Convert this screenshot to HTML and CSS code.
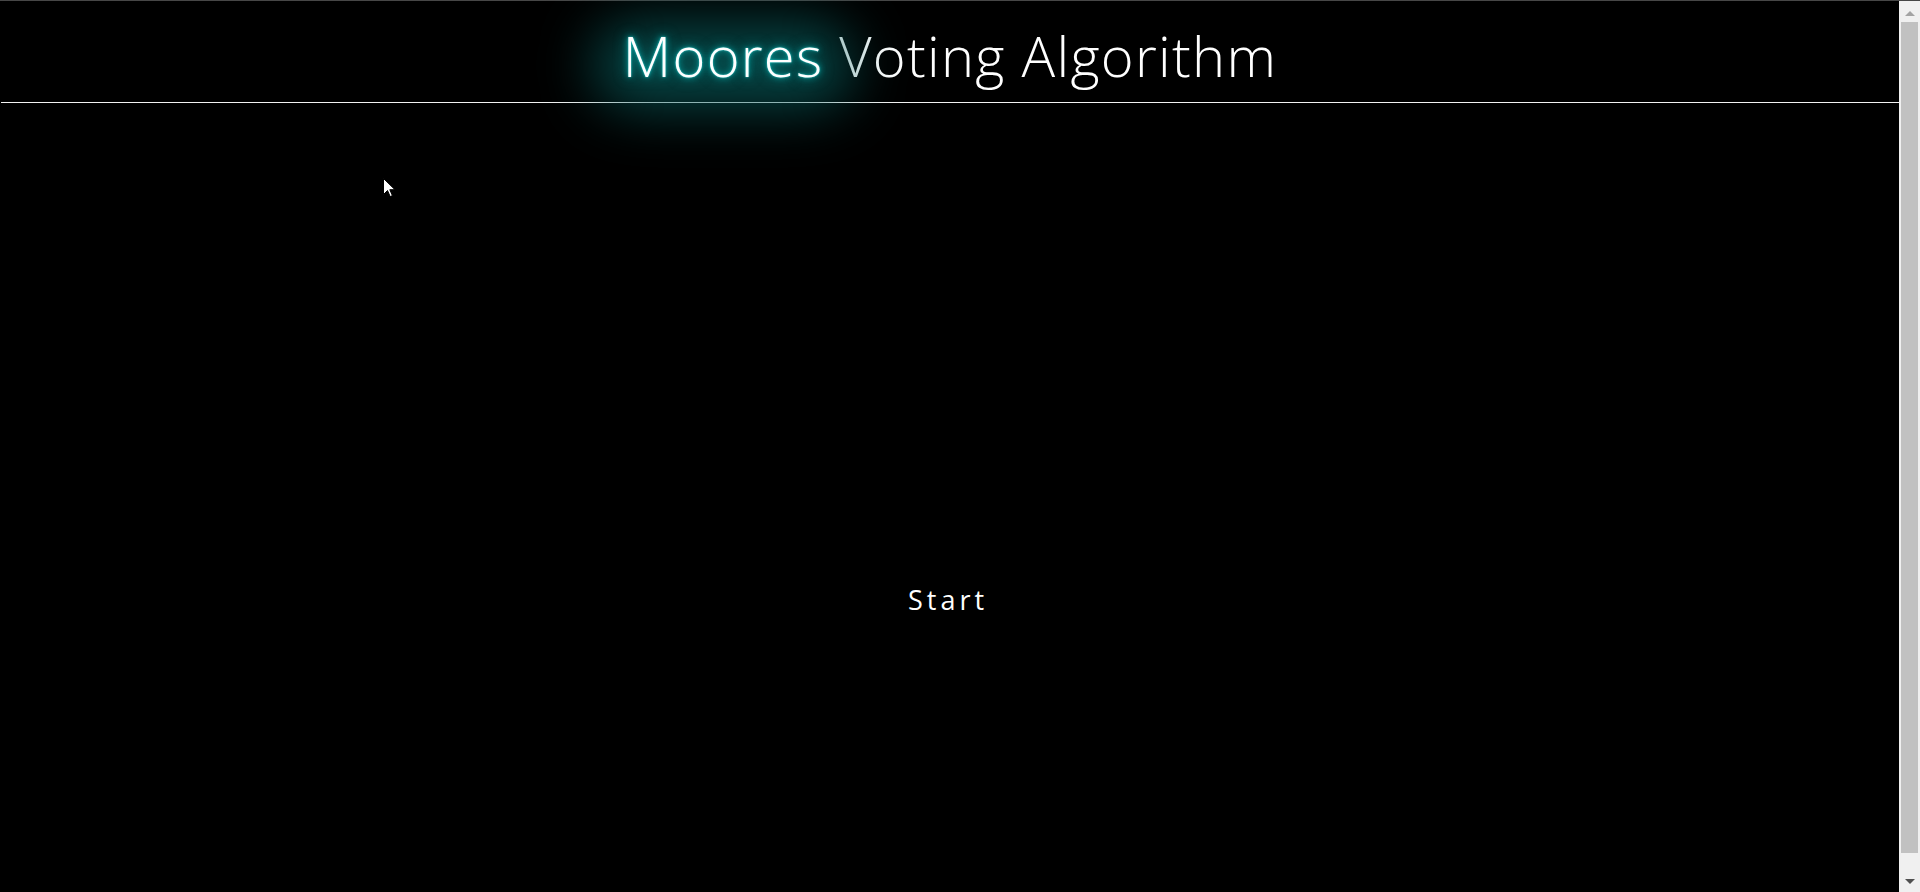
FILE: index.html
```html
<!DOCTYPE html>
<html lang="en">
<head>
<meta charset="utf-8">
<title>Moores Voting Algorithm</title>
<link rel="stylesheet" href="styles.css">
</head>
<body>
<div class="window">
  <main class="page">
    <header class="header">
      <h1 class="title"><span class="glow">Moores</span> Voting Algorithm</h1>
    </header>
    <section class="stage">
      <button class="start-btn" type="button">Start</button>
    </section>
    <svg class="cursor" width="13" height="20" viewBox="0 0 13 20">
      <path d="M0.5 0.5 L0.5 16.5 L4.5 12.5 L7.2 18.6 L9.4 17.6 L6.8 11.7 L12 11.7 Z" fill="#fff" stroke="#000" stroke-width="1"/>
    </svg>
  </main>
  <div class="scrollbar">
    <div class="arrow arrow-up"></div>
    <div class="thumb"></div>
    <div class="arrow arrow-down"></div>
  </div>
</div>
</body>
</html>
```

FILE: styles.css
```css
html, body {
  margin: 0;
  padding: 0;
  height: 100%;
  background: #000;
  overflow: hidden;
}

.window {
  display: flex;
  height: 892px;
  box-sizing: border-box;
  border-top: 1px solid #474747;
}

.page {
  position: relative;
  flex: 1;
  display: flex;
  flex-direction: column;
  padding-left: 1px;
  font-family: "Open Sans", "DejaVu Sans", sans-serif;
  color: #fff;
}

.header {
  border-bottom: 1px solid #f2f2f2;
  padding: 16px 0 9px;
  text-align: center;
}

.title {
  margin: 0;
  font-weight: 300;
  font-size: 56px;
  line-height: 76px;
  letter-spacing: 1.3px;
  color: #fff;
}

.glow {
  position: relative;
  isolation: isolate;
  color: #fff;
  text-shadow:
    0 0 2px rgba(80, 255, 255, 0.7),
    0 0 6px rgba(0, 200, 200, 0.8),
    0 0 14px rgba(0, 150, 150, 0.8);
}

.glow::before {
  content: "";
  position: absolute;
  left: -30px;
  right: -30px;
  top: 6px;
  bottom: -14px;
  border-radius: 50px;
  background: rgba(8, 95, 95, 0.75);
  filter: blur(28px);
  z-index: -1;
}

.stage {
  flex: 1;
  display: flex;
  justify-content: center;
  align-items: flex-start;
  padding-top: 478px;
}

.start-btn {
  background: none;
  border: none;
  padding: 0 4px 0 0;
  font-family: "Open Sans", "DejaVu Sans", sans-serif;
  font-size: 27px;
  line-height: 37px;
  letter-spacing: 4px;
  color: #fff;
  cursor: pointer;
}

.cursor {
  position: absolute;
  left: 383px;
  top: 177px;
}

.scrollbar {
  width: 21px;
  background: #f0f0f0;
  display: flex;
  flex-direction: column;
  align-items: center;
}

.arrow {
  width: 0;
  height: 0;
  border-left: 5px solid transparent;
  border-right: 5px solid transparent;
}

.arrow-up {
  margin-top: 10px;
  border-bottom: 5px solid #a3a3a3;
}

.arrow-down {
  margin-bottom: 8px;
  border-top: 5px solid #505050;
}

.thumb {
  width: 17px;
  margin: 6px 0 26px;
  flex: 1;
  background: #c1c1c1;
}
```
